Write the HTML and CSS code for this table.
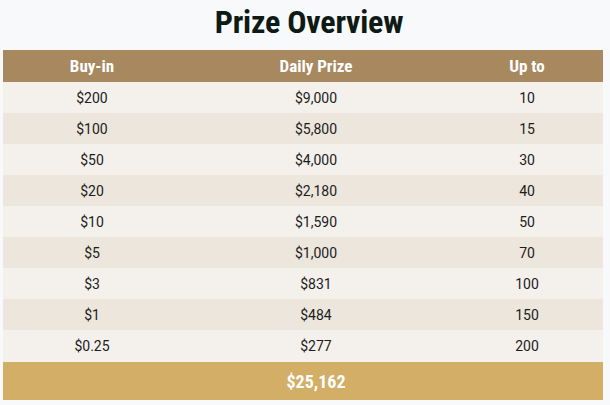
FILE: index.html
```html
<!DOCTYPE html>
<html>
<head>
<meta charset="utf-8">
<link rel="stylesheet" href="styles.css">
</head>
<body>
<div class="wrap">
  <h1 class="title">Prize Overview</h1>
  <table class="prizes">
    <colgroup>
      <col class="c1"><col class="c2"><col class="c3">
    </colgroup>
    <thead>
      <tr><th>Buy-in</th><th>Daily Prize</th><th>Up to</th></tr>
    </thead>
    <tbody>
      <tr><td>$200</td><td>$9,000</td><td>10</td></tr>
      <tr><td>$100</td><td>$5,800</td><td>15</td></tr>
      <tr><td>$50</td><td>$4,000</td><td>30</td></tr>
      <tr><td>$20</td><td>$2,180</td><td>40</td></tr>
      <tr><td>$10</td><td>$1,590</td><td>50</td></tr>
      <tr><td>$5</td><td>$1,000</td><td>70</td></tr>
      <tr><td>$3</td><td>$831</td><td>100</td></tr>
      <tr><td>$1</td><td>$484</td><td>150</td></tr>
      <tr><td>$0.25</td><td>$277</td><td>200</td></tr>
    </tbody>
    <tfoot>
      <tr><td></td><td>$25,162</td><td></td></tr>
    </tfoot>
  </table>
</div>
</body>
</html>
```
FILE: styles.css
```css
html, body {
  margin: 0;
  padding: 0;
  background: #f8f9fb;
}
body {
  font-family: Roboto, "Liberation Sans", sans-serif;
}
.wrap {
  padding: 0 7px 0 3px;
}
.title {
  margin: 0;
  padding-left: 12px;
  height: 50px;
  line-height: 44px;
  text-align: center;
  font-size: 32px;
  font-weight: 700;
  font-stretch: condensed;
  letter-spacing: -0.2px;
  color: #0e1a13;
}
.prizes {
  width: 600px;
  border-collapse: collapse;
  table-layout: fixed;
}
.c1 { width: 178px; }
.c2 { width: 270px; }
.c3 { width: 152px; }
.prizes th {
  background: #a8885f;
  color: #fff;
  height: 32px;
  padding: 0;
  font-size: 17px;
  font-weight: 700;
  font-stretch: condensed;
  letter-spacing: 0;
  text-align: center;
}
.prizes td {
  height: 31px;
  padding: 0;
  text-align: center;
  font-size: 14px;
  color: #1c1c1c;
}
.prizes tbody tr:nth-child(odd) td { background: #f4f1ec; }
.prizes tbody tr:nth-child(even) td { background: #ece6dc; }
.prizes tfoot td {
  background: #d2ae67;
  color: #fff;
  height: 38px;
  font-size: 18px;
  font-weight: 700;
  font-stretch: condensed;
  letter-spacing: 0;
  border-top: 1px solid #f4f1ec;
}
```
